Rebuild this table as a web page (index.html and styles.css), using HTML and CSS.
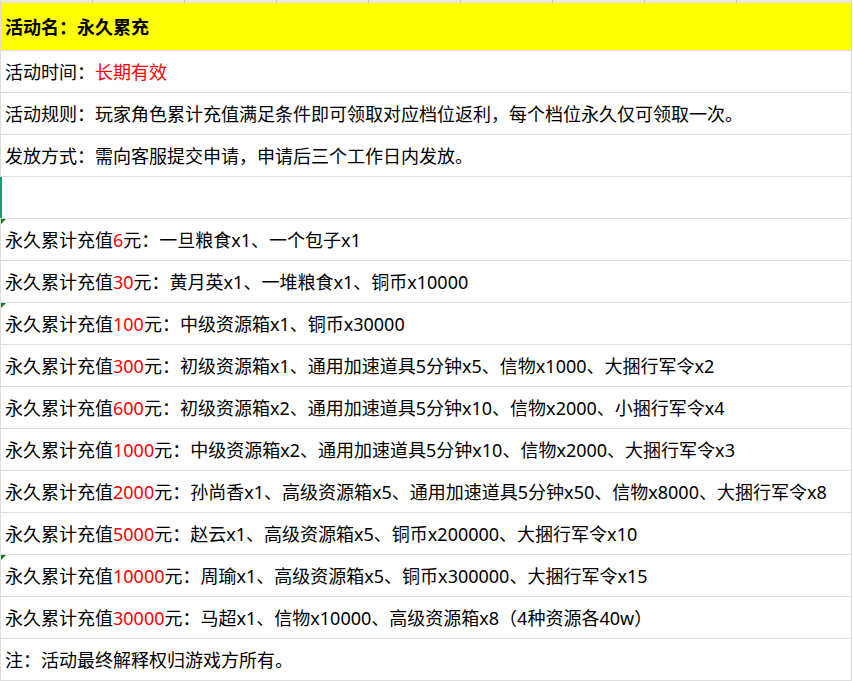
FILE: index.html
```html
<!DOCTYPE html>
<html lang="zh">
<head>
<meta charset="utf-8">
<title>永久累充</title>
<link rel="stylesheet" href="styles.css">
</head>
<body>
<div class="sheet">
  <div class="colbar">
    <span class="col"></span><span class="col"></span><span class="col"></span><span class="col"></span>
    <span class="col"></span><span class="col"></span><span class="col"></span><span class="col"></span>
    <span class="col last"></span>
  </div>
  <div class="row head">活动名：永久累充</div>
  <div class="row">活动时间：<span class="red">长期有效</span></div>
  <div class="row">活动规则：玩家角色累计充值满足条件即可领取对应档位返利，每个档位永久仅可领取一次。</div>
  <div class="row">发放方式：需向客服提交申请，申请后三个工作日内发放。</div>
  <div class="row empty"></div>
  <div class="row mark">永久累计充值<span class="red">6</span>元：一旦粮食x1、一个包子x1</div>
  <div class="row">永久累计充值<span class="red">30</span>元：黄月英x1、一堆粮食x1、铜币x10000</div>
  <div class="row mark">永久累计充值<span class="red">100</span>元：中级资源箱x1、铜币x30000</div>
  <div class="row">永久累计充值<span class="red">300</span>元：初级资源箱x1、通用加速道具5分钟x5、信物x1000、大捆行军令x2</div>
  <div class="row">永久累计充值<span class="red">600</span>元：初级资源箱x2、通用加速道具5分钟x10、信物x2000、小捆行军令x4</div>
  <div class="row">永久累计充值<span class="red">1000</span>元：中级资源箱x2、通用加速道具5分钟x10、信物x2000、大捆行军令x3</div>
  <div class="row">永久累计充值<span class="red">2000</span>元：孙尚香x1、高级资源箱x5、通用加速道具5分钟x50、信物x8000、大捆行军令x8</div>
  <div class="row">永久累计充值<span class="red">5000</span>元：赵云x1、高级资源箱x5、铜币x200000、大捆行军令x10</div>
  <div class="row mark">永久累计充值<span class="red">10000</span>元：周瑜x1、高级资源箱x5、铜币x300000、大捆行军令x15</div>
  <div class="row">永久累计充值<span class="red">30000</span>元：马超x1、信物x10000、高级资源箱x8（4种资源各40w）</div>
  <div class="row">注：活动最终解释权归游戏方所有。</div>
</div>
</body>
</html>
```
FILE: styles.css
```css
html, body {
  margin: 0;
  padding: 0;
  background: #ffffff;
}

.sheet {
  width: 852px;
  border-left: 1px solid #dcdcdc;
  border-right: 1px solid #dcdcdc;
  box-sizing: border-box;
  font-family: "Noto Sans", "Noto Sans CJK SC", sans-serif;
  font-size: 18px;
  color: #000000;
}

.colbar {
  display: flex;
  height: 3px;
  background: #e8e8e8;
}

.col {
  width: 92px;
  flex: none;
  border-right: 1px solid #c6c6c6;
  box-sizing: border-box;
}

.col.last {
  flex: 1;
  border-right: none;
}

.row {
  position: relative;
  display: flex;
  align-items: center;
  height: 42px;
  box-sizing: border-box;
  border-bottom: 1px solid #dedede;
  padding-left: 4px;
  white-space: nowrap;
  line-height: 1;
}

.row.head {
  height: 48px;
  background: #ffff00;
  font-weight: bold;
}

.red {
  color: #ff0000;
}

.row.empty {
  box-shadow: inset 2px 0 0 #14a06a;
  margin-left: -1px;
}

.row.mark::before {
  content: "";
  position: absolute;
  left: 0;
  top: 0;
  border-top: 5px solid #0b7d1f;
  border-right: 5px solid transparent;
}
```
